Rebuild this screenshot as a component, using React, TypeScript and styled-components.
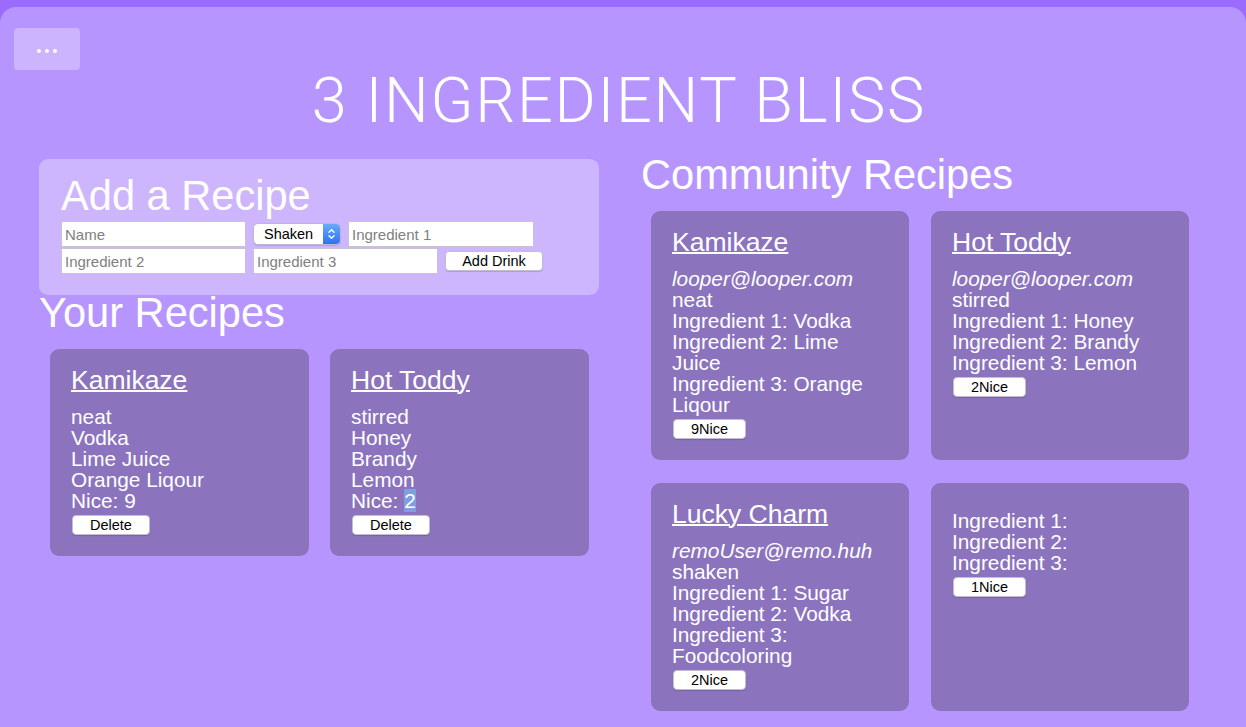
import styled, { createGlobalStyle } from "styled-components";

const GlobalStyle = createGlobalStyle`
  html, body {
    margin: 0;
    padding: 0;
    background: #9b6bfd;
  }
  body {
    font-family: "Liberation Sans", Arial, sans-serif;
    color: #fff;
  }
`;

const Panel = styled.main`
  position: relative;
  margin-top: 7px;
  min-height: 720px;
  padding: 58px 47px 20px 39px;
  box-sizing: border-box;
  background: #b696fe;
  border-radius: 16px 16px 0 0;
`;

const MenuButton = styled.button`
  position: absolute;
  left: 14px;
  top: 21px;
  width: 66px;
  height: 42px;
  padding: 3px 0 0;
  display: flex;
  align-items: center;
  justify-content: center;
  gap: 4px;
  border: none;
  border-radius: 4px;
  background: rgba(255, 255, 255, 0.3);
`;

const Dot = styled.span`
  width: 4px;
  height: 4px;
  border-radius: 50%;
  background: #fff;
`;

const Title = styled.h1`
  margin: 0;
  text-align: center;
  font-family: Roboto, "Liberation Sans", sans-serif;
  font-weight: 300;
  font-size: 63px;
  line-height: 72px;
  letter-spacing: 1.7px;
`;

const Columns = styled.div`
  display: grid;
  grid-template-columns: 560px 558px;
  column-gap: 42px;
  align-items: start;
  margin-top: 20px;
`;

const Column = styled.section``;

const AddBox = styled.div`
  margin-top: 2px;
  padding: 19px 22px 21px;
  background: #cdb6fe;
  border-radius: 9px;
`;

const Heading = styled.h2<{ $space?: number }>`
  margin: 0 0 ${(p) => p.$space ?? 18}px;
  font-size: 41.6px;
  font-weight: 400;
  line-height: 36px;
`;

const Form = styled.form`
  display: flex;
  flex-wrap: wrap;
  align-items: center;
  gap: 1px 7px;
`;

const TextInput = styled.input<{ $w: number }>`
  box-sizing: border-box;
  width: ${(p) => p.$w}px;
  height: 26px;
  padding: 0 3px;
  border: 1px solid #c9c2d6;
  background: #fff;
  font-family: "Liberation Sans", Arial, sans-serif;
  font-size: 15px;
  color: #222;
  &::placeholder {
    color: #808080;
  }
`;

const SelectWrap = styled.span`
  position: relative;
  display: inline-block;
  width: 88px;
  height: 22px;
`;

const Select = styled.select`
  appearance: none;
  box-sizing: border-box;
  width: 100%;
  height: 100%;
  padding: 0 0 0 10px;
  border: 1px solid #bfb6d0;
  border-radius: 5px;
  background: #fff;
  box-shadow: 0 1px 1px rgba(0, 0, 0, 0.12);
  font-family: "Liberation Sans", Arial, sans-serif;
  font-size: 14.5px;
  color: #000;
`;

const SelectArrow = styled.span`
  position: absolute;
  top: 1px;
  right: 1px;
  bottom: 1px;
  width: 17px;
  display: flex;
  align-items: center;
  justify-content: center;
  border-radius: 0 4px 4px 0;
  background: linear-gradient(#6aa9fb, #2c73f2);
  pointer-events: none;
`;

const FormButton = styled.button`
  box-sizing: border-box;
  width: 98px;
  height: 20px;
  padding: 0;
  border: 1px solid #c4bdd2;
  border-radius: 4px;
  background: #fff;
  box-shadow: 0 1px 1px rgba(0, 0, 0, 0.15);
  font-family: "Liberation Sans", Arial, sans-serif;
  font-size: 14.5px;
  color: #000;
`;

const CardGrid = styled.div<{ $gap: number }>`
  display: grid;
  grid-template-columns: 1fr 1fr;
  gap: 23px ${(p) => p.$gap}px;
  padding: 0 10px 0 ${(p) => (p.$gap === 21 ? 11 : 10)}px;
`;

const Card = styled.article`
  padding: 16px 21px 21px;
  background: #8b74bd;
  border-radius: 9px;
`;

const CardTitle = styled.h3`
  margin: 0 0 11px;
  font-size: 26.5px;
  font-weight: 400;
  line-height: 30px;
  text-decoration: underline;
  text-decoration-thickness: 1.5px;
`;

const Line = styled.div<{ $italic?: boolean }>`
  font-size: 20.8px;
  line-height: 21px;
  font-style: ${(p) => (p.$italic ? "italic" : "normal")};
`;

const Picked = styled.span`
  background: #7f9fe0;
`;

const CardButton = styled.button`
  display: block;
  box-sizing: border-box;
  height: 20px;
  margin: 4px 0 0 1px;
  padding: 0 17px;
  border: 1px solid #c4bdd2;
  border-radius: 4px;
  background: #fff;
  box-shadow: 0 1px 1px rgba(0, 0, 0, 0.15);
  font-family: "Liberation Sans", Arial, sans-serif;
  font-size: 14.5px;
  line-height: 18px;
  color: #000;
`;

type Recipe = {
  name: string;
  user: string;
  method: string;
  ing: [string, string, string];
  nice: number;
};

const mine: Recipe[] = [
  { name: "Kamikaze", user: "", method: "neat", ing: ["Vodka", "Lime Juice", "Orange Liqour"], nice: 9 },
  { name: "Hot Toddy", user: "", method: "stirred", ing: ["Honey", "Brandy", "Lemon"], nice: 2 },
];

const community: Recipe[] = [
  { name: "Kamikaze", user: "looper@looper.com", method: "neat", ing: ["Vodka", "Lime Juice", "Orange Liqour"], nice: 9 },
  { name: "Hot Toddy", user: "looper@looper.com", method: "stirred", ing: ["Honey", "Brandy", "Lemon"], nice: 2 },
  { name: "Lucky Charm", user: "remoUser@remo.huh", method: "shaken", ing: ["Sugar", "Vodka", "Foodcoloring"], nice: 2 },
  { name: "", user: "", method: "", ing: ["", "", ""], nice: 1 },
];

function Chevrons() {
  return (
    <svg width="9" height="14" viewBox="0 0 9 14" fill="none" stroke="#fff" strokeWidth="1.4" strokeLinecap="round" strokeLinejoin="round">
      <path d="M2 5.2 4.5 2.7 7 5.2" />
      <path d="M2 8.8 4.5 11.3 7 8.8" />
    </svg>
  );
}

export default function App() {
  return (
    <>
      <GlobalStyle />
      <Panel>
        <MenuButton aria-label="menu">
          <Dot />
          <Dot />
          <Dot />
        </MenuButton>

        <Title>3 INGREDIENT BLISS</Title>

        <Columns>
          <Column>
            <AddBox>
              <Heading $space={7}>Add a Recipe</Heading>
              <Form onSubmit={(e) => e.preventDefault()}>
                <TextInput $w={185} placeholder="Name" />
                <SelectWrap>
                  <Select defaultValue="shaken">
                    <option value="shaken">Shaken</option>
                    <option value="stirred">Stirred</option>
                    <option value="neat">Neat</option>
                  </Select>
                  <SelectArrow>
                    <Chevrons />
                  </SelectArrow>
                </SelectWrap>
                <TextInput $w={186} placeholder="Ingredient 1" />
                <TextInput $w={185} placeholder="Ingredient 2" />
                <TextInput $w={185} placeholder="Ingredient 3" />
                <FormButton type="submit">Add Drink</FormButton>
              </Form>
            </AddBox>

            <Heading>Your Recipes</Heading>
            <CardGrid $gap={21}>
              {mine.map((r, i) => (
                <Card key={r.name}>
                  <CardTitle>{r.name}</CardTitle>
                  <Line>{r.method}</Line>
                  {r.ing.map((x) => (
                    <Line key={x}>{x}</Line>
                  ))}
                  <Line>
                    Nice: {i === 1 ? <Picked>{r.nice}</Picked> : r.nice}
                  </Line>
                  <CardButton>Delete</CardButton>
                </Card>
              ))}
            </CardGrid>
          </Column>

          <Column>
            <Heading>Community Recipes</Heading>
            <CardGrid $gap={22}>
              {community.map((r, i) => (
                <Card key={i}>
                  <CardTitle>{r.name}</CardTitle>
                  <Line $italic>{r.user}</Line>
                  <Line>{r.method}</Line>
                  {r.ing.map((x, n) => (
                    <Line key={n}>
                      Ingredient {n + 1}: {x}
                    </Line>
                  ))}
                  <CardButton>{r.nice}Nice</CardButton>
                </Card>
              ))}
            </CardGrid>
          </Column>
        </Columns>
      </Panel>
    </>
  );
}
